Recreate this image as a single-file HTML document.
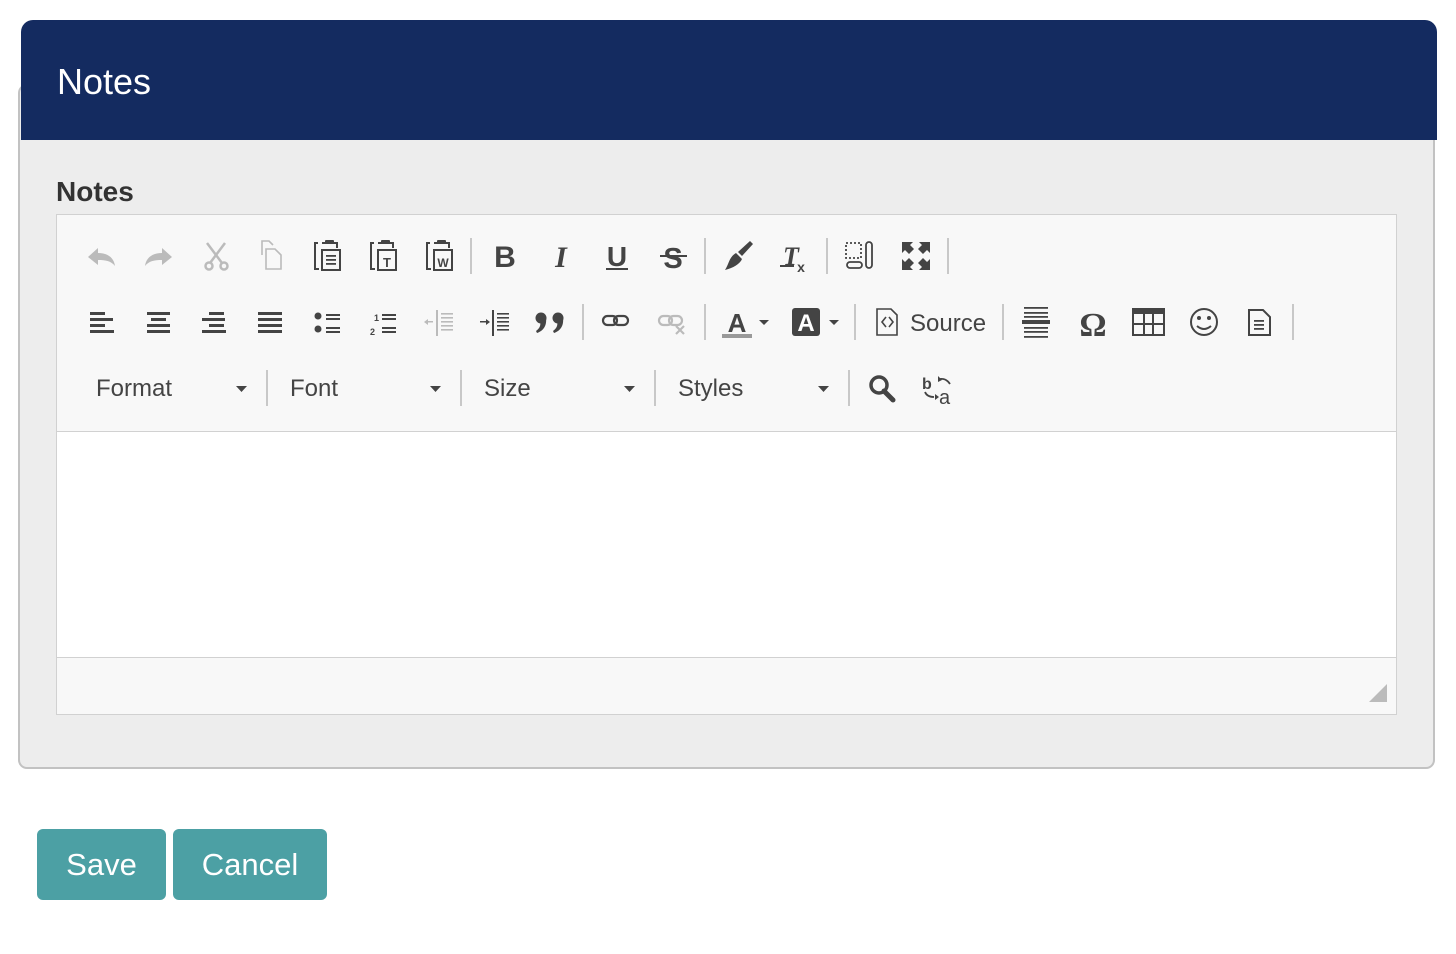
<!DOCTYPE html>
<html><head><meta charset="utf-8"><style>
html,body{margin:0;padding:0;background:#fff;width:1456px;height:954px;overflow:hidden;font-family:"Liberation Sans",Arial,sans-serif}
.panel{position:absolute;left:18px;top:84px;width:1413px;height:681px;background:#ededed;border:2px solid #c2c2c2;border-radius:9px}
.hdr{position:absolute;left:21px;top:20px;width:1416px;height:120px;background:#142b60;border-radius:12px 12px 0 0}
.hdr span{position:absolute;left:36px;top:40px;color:#fff;font-size:36px;line-height:44px}
.lbl{position:absolute;left:56px;top:175px;font-size:28px;font-weight:bold;color:#333;line-height:34px}
.ed{position:absolute;left:56px;top:214px;width:1339px;height:499px;border:1px solid #d1d1d1;background:#f8f8f8}
.content{position:absolute;left:0;top:216px;width:1339px;height:225px;background:#fff;border-top:1px solid #d1d1d1;border-bottom:1px solid #d1d1d1}
.btn{position:absolute;top:829px;height:71px;background:#4ca0a4;border-radius:6px;color:#fff;font-size:31px;line-height:71px;text-align:center}
svg{position:absolute;left:0;top:0}
</style></head><body>
<div class="panel"></div>
<div class="hdr"><span>Notes</span></div>
<div class="lbl">Notes</div>
<div class="ed"><div class="content"></div></div>
<div class="btn" style="left:37px;width:129px">Save</div>
<div class="btn" style="left:173px;width:154px">Cancel</div>
<svg width="1456" height="954" viewBox="0 0 1456 954">
<g stroke="#c8c8c8" stroke-width="2">
<line x1="471" y1="238" x2="471" y2="274"/><line x1="705" y1="238" x2="705" y2="274"/><line x1="827" y1="238" x2="827" y2="274"/><line x1="948" y1="238" x2="948" y2="274"/>
<line x1="583" y1="304" x2="583" y2="340"/><line x1="705" y1="304" x2="705" y2="340"/><line x1="855" y1="304" x2="855" y2="340"/><line x1="1003" y1="304" x2="1003" y2="340"/><line x1="1293" y1="304" x2="1293" y2="340"/>
<line x1="267" y1="370" x2="267" y2="406"/><line x1="461" y1="370" x2="461" y2="406"/><line x1="655" y1="370" x2="655" y2="406"/><line x1="849" y1="370" x2="849" y2="406"/>
</g>
<path d="M88 257 L98 248 V253 C108 253 114 258 115 266 C111 261 106 260 98 260 V265 Z" fill="#bbb"/>
<path d="M172 257 L162 248 V253 C152 253 146 258 145 266 C149 261 154 260 162 260 V265 Z" fill="#bbb"/>
<g stroke="#bbb" stroke-width="2.5" fill="none"><line x1="207" y1="243" x2="222" y2="263"/><line x1="225" y1="243" x2="210" y2="263"/><circle cx="209" cy="266" r="3.5"/><circle cx="224" cy="266" r="3.5"/></g>
<g stroke="#bbb" stroke-width="1.6" fill="none"><path d="M262 255 V241 H269 L273 245"/><path d="M266 249 H275 L281 255 V269 H266 Z"/></g>
<g fill="none" stroke="#444" stroke-width="2">
<path d="M318 243 H315 V269 H319"/><path d="M322 250 H340 V270 H322 Z"/><path d="M322 243 H337 V248"/>
<path d="M374 243 H371 V269 H375"/><path d="M378 250 H396 V270 H378 Z"/><path d="M378 243 H393 V248"/>
<path d="M430 243 H427 V269 H431"/><path d="M434 250 H452 V270 H434 Z"/><path d="M434 243 H449 V248"/>
</g>
<g fill="#444"><rect x="325" y="240" width="9" height="4" rx="1"/><rect x="381" y="240" width="9" height="4" rx="1"/><rect x="437" y="240" width="9" height="4" rx="1"/>
<rect x="326" y="255" width="10" height="1.8"/><rect x="326" y="259" width="10" height="1.8"/><rect x="326" y="263" width="10" height="1.8"/></g>
<text x="387" y="267" font-size="13" fill="#444" text-anchor="middle" font-weight="bold">T</text>
<text x="443" y="267" font-size="12" fill="#444" text-anchor="middle" font-weight="bold">W</text>
<text x="505" y="267" font-size="30" font-weight="bold" fill="#444" text-anchor="middle">B</text>
<text x="561" y="267" font-size="30" font-weight="bold" font-style="italic" font-family="Liberation Serif" fill="#444" text-anchor="middle">I</text>
<text x="617" y="266" font-size="28" font-weight="bold" fill="#444" text-anchor="middle">U</text><rect x="606" y="268" width="22" height="2" fill="#444"/>
<text x="673" y="268" font-size="29" font-weight="bold" fill="#444" text-anchor="middle">S</text><rect x="660" y="255" width="27" height="2" fill="#444"/>
<path d="M750 241 L753 244 L742 256 L738 252 Z" fill="#444"/><path d="M736 253 L742 259 C740 264 733 268 725 270 C729 264 729 257 736 253 Z" fill="#444"/>
<text x="791" y="265" font-size="26" font-weight="bold" font-style="italic" font-family="Liberation Serif" fill="#444" text-anchor="middle">T</text><rect x="780" y="265" width="14" height="2" fill="#444"/>
<text x="801" y="272" font-size="14" font-weight="bold" fill="#444" text-anchor="middle">x</text>
<g fill="none" stroke="#444" stroke-width="1.8"><rect x="846" y="243" width="15" height="15" stroke-dasharray="2 2"/><rect x="847" y="262" width="15" height="6" rx="3"/><rect x="866" y="242" width="6" height="26" rx="3"/></g>
<g fill="#444">
<path d="M902 242 H913 L910 245 L914 249 L909 254 L905 250 L902 253 Z"/>
<path d="M930 242 H919 L922 245 L918 249 L923 254 L927 250 L930 253 Z"/>
<path d="M902 270 H913 L910 267 L914 263 L909 258 L905 262 L902 259 Z"/>
<path d="M930 270 H919 L922 267 L918 263 L923 258 L927 262 L930 259 Z"/></g>
<g fill="#444">
<rect x="90" y="312" width="15" height="3"/><rect x="90" y="318" width="23" height="3"/><rect x="90" y="324" width="15" height="3"/><rect x="90" y="330" width="24" height="3"/>
<rect x="147" y="312" width="23" height="3"/><rect x="151" y="318" width="15" height="3"/><rect x="147" y="324" width="23" height="3"/><rect x="147" y="330" width="23" height="3"/>
<rect x="209" y="312" width="15" height="3"/><rect x="202" y="318" width="23" height="3"/><rect x="209" y="324" width="15" height="3"/><rect x="202" y="330" width="24" height="3"/>
<rect x="258" y="312" width="24" height="3"/><rect x="258" y="318" width="24" height="3"/><rect x="258" y="324" width="24" height="3"/><rect x="258" y="330" width="24" height="3"/>
<circle cx="318" cy="316" r="3.5"/><circle cx="318" cy="329" r="3.5"/><rect x="326" y="314" width="14" height="2"/><rect x="326" y="318" width="14" height="2"/><rect x="326" y="327" width="14" height="2"/><rect x="326" y="331" width="14" height="2"/>
<rect x="382" y="314" width="14" height="2"/><rect x="382" y="318" width="14" height="2"/><rect x="382" y="327" width="14" height="2"/><rect x="382" y="331" width="14" height="2"/>
</g>
<text x="374" y="321" font-size="9" fill="#444" font-weight="bold">1</text><text x="370" y="335" font-size="9" fill="#444" font-weight="bold">2</text>
<g fill="#bbb"><rect x="436" y="310" width="2" height="26"/><rect x="441" y="313" width="12" height="1.6"/><rect x="441" y="317" width="12" height="1.6"/><rect x="441" y="321" width="12" height="1.6"/><rect x="441" y="325" width="12" height="1.6"/><rect x="441" y="329" width="12" height="1.6"/><path d="M424 322 L428 319 V325 Z"/><rect x="427" y="321" width="6" height="1.5"/></g>
<g fill="#444"><rect x="492" y="310" width="2" height="26"/><rect x="497" y="313" width="12" height="1.6"/><rect x="497" y="317" width="12" height="1.6"/><rect x="497" y="321" width="12" height="1.6"/><rect x="497" y="325" width="12" height="1.6"/><rect x="497" y="329" width="12" height="1.6"/><path d="M490 322 L486 319 V325 Z"/><rect x="480" y="321" width="7" height="1.5"/></g>
<g fill="#444">
<circle cx="541" cy="318" r="5.5"/><path d="M546 318 C547 326 543 331 537 333 L536 331 C540 328 541 325 540 321 Z"/>
<circle cx="558" cy="318" r="5.5"/><path d="M563 318 C564 326 560 331 554 333 L553 331 C557 328 558 325 557 321 Z"/>
</g>
<g fill="none" stroke="#444" stroke-width="2.2"><rect x="603" y="316" width="14" height="9" rx="4.5"/><rect x="614" y="316" width="14" height="9" rx="4.5"/></g>
<g fill="none" stroke="#bbb" stroke-width="2.2"><rect x="659" y="316" width="13" height="9" rx="4.5"/><rect x="669" y="316" width="13" height="9" rx="4.5"/><path d="M676 326 L684 334 M684 326 L676 334"/></g>
<text x="737" y="332" font-size="26" font-weight="bold" fill="#444" text-anchor="middle">A</text><rect x="722" y="334" width="30" height="4" fill="#999"/>
<path d="M759 320 H769 L764 325 Z M829 320 H839 L834 325 Z" fill="#444"/>
<rect x="792" y="308" width="28" height="28" rx="3" fill="#444"/><text x="806" y="331" font-size="24" font-weight="bold" fill="#fff" text-anchor="middle">A</text>
<g fill="none" stroke="#444" stroke-width="1.6"><path d="M877 309 H891 L897 315 V335 H877 Z"/><path d="M886 317 L882 322 L886 327 M889 317 L893 322 L889 327"/></g>
<text x="910" y="331" font-size="24" fill="#444">Source</text>
<g fill="#444"><rect x="1024" y="307" width="24" height="1.8"/><rect x="1024" y="312" width="24" height="1.8"/><rect x="1024" y="316" width="24" height="1.8"/><rect x="1022" y="320" width="28" height="4"/><rect x="1024" y="327" width="24" height="1.8"/><rect x="1024" y="331" width="24" height="1.8"/><rect x="1024" y="336" width="24" height="1.8"/></g>
<text x="1093" y="336" font-size="34" font-weight="bold" font-family="Liberation Serif" fill="#444" text-anchor="middle">Ω</text>
<g fill="none" stroke="#444" stroke-width="2"><rect x="1133" y="309" width="31" height="26"/><path d="M1144 314 V335 M1153 314 V335 M1133 324 H1164"/></g><rect x="1132" y="308" width="33" height="6" fill="#444"/>
<g fill="none" stroke="#444" stroke-width="2"><circle cx="1204" cy="322" r="13"/><path d="M1197 326 Q1204 332 1211 326"/></g><circle cx="1199" cy="318" r="2" fill="#444"/><circle cx="1209" cy="318" r="2" fill="#444"/>
<g fill="none" stroke="#444" stroke-width="2"><path d="M1249 310 H1263 L1270 317 V335 H1249 Z"/></g><g fill="#444"><rect x="1254" y="320" width="10" height="1.8"/><rect x="1254" y="324" width="10" height="1.8"/><rect x="1254" y="328" width="10" height="1.8"/></g>
<g font-size="24" fill="#444"><text x="96" y="396">Format</text><text x="290" y="396">Font</text><text x="484" y="396">Size</text><text x="678" y="396">Styles</text></g>
<path d="M236 386 H247 L241.5 392 Z M430 386 H441 L435.5 392 Z M624 386 H635 L629.5 392 Z M818 386 H829 L823.5 392 Z" fill="#444"/>
<circle cx="879" cy="385" r="8" fill="none" stroke="#444" stroke-width="3.5"/><path d="M884 391 L893 400" stroke="#444" stroke-width="5" stroke-linecap="round"/>
<text x="922" y="389" font-size="16" font-weight="bold" fill="#444">b</text><text x="939" y="404" font-size="20" fill="#444">a</text>
<g fill="none" stroke="#444" stroke-width="1.8"><path d="M950 384 Q946 378 940 379"/><path d="M925 392 Q927 397 934 397"/></g>
<path d="M938 376 L942 380 L938 382 Z M935 394 L935 400 L939 397 Z" fill="#444"/>
<path d="M1387 684 V702 H1369 Z" fill="#bbb"/>
</svg>
</body></html>
